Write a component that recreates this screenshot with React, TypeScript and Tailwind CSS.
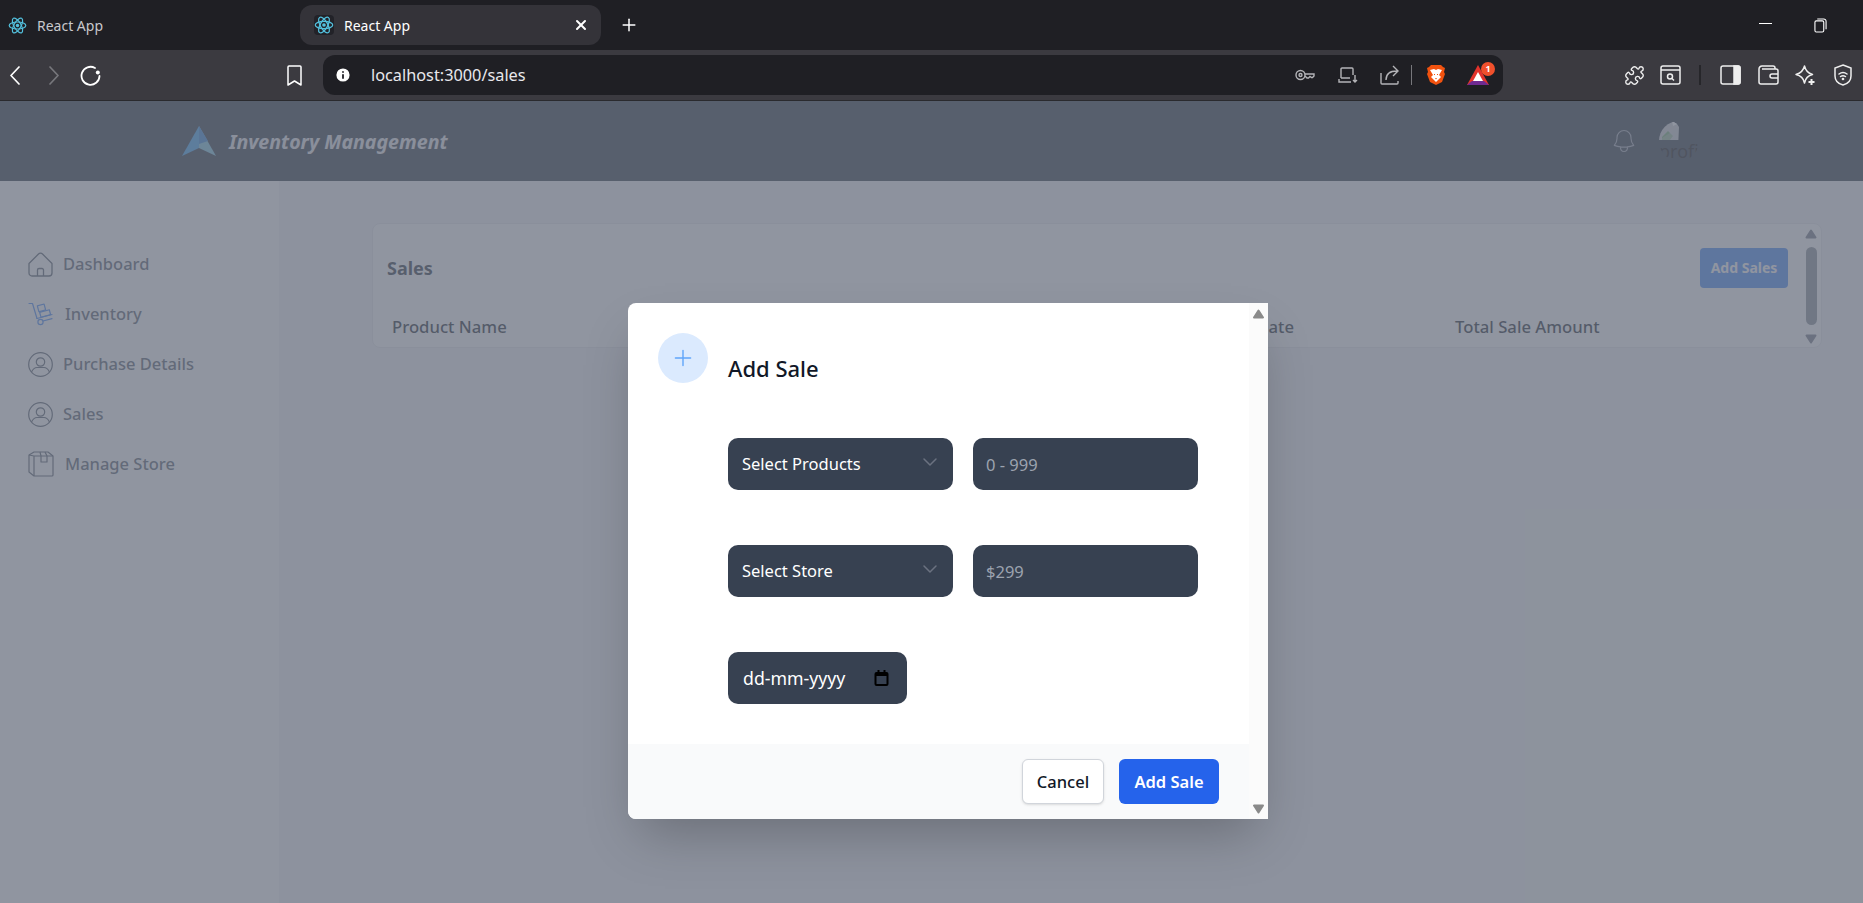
import React from "react";
import { HiOutlineBell } from "react-icons/hi2";
import { ChevronDown, Plus, X, Info, Puzzle } from "lucide-react";

const ReactIcon = ({ className }: { className?: string }) => (
  <svg viewBox="0 0 24 24" className={className} fill="none" stroke="#53c1de" strokeWidth="1.5">
    <circle cx="12" cy="12" r="2.2" fill="#53c1de" stroke="none" />
    <ellipse cx="12" cy="12" rx="10.5" ry="4.4" />
    <ellipse cx="12" cy="12" rx="10.5" ry="4.4" transform="rotate(60 12 12)" />
    <ellipse cx="12" cy="12" rx="10.5" ry="4.4" transform="rotate(120 12 12)" />
  </svg>
);

const Tri = ({ down, className }: { down?: boolean; className?: string }) => (
  <svg viewBox="0 0 12 10" className={className}>
    <path d={down ? "M1.500 1.500h9L6 8.500z" : "M6 1.500l4.500 7h-9z"} fill="currentColor" stroke="currentColor" strokeWidth="2" strokeLinejoin="round" />
  </svg>
);

const HomeIcon = () => (
  <svg viewBox="0 0 25 25" className="w-[25px] h-[25px] text-[#4b5563] shrink-0" fill="none" stroke="currentColor" strokeWidth="1.300" strokeLinejoin="round">
    <path d="M1 11.500L10.500 2a2.800 2.800 0 0 1 4 0L24 11.500V21a3 3 0 0 1-3 3H4a3 3 0 0 1-3-3z" />
    <path d="M9.500 24v-6a1.500 1.500 0 0 1 1.500-1.500h3a1.500 1.500 0 0 1 1.500 1.500v6" />
  </svg>
);

const UserIcon = () => (
  <svg viewBox="0 0 25 25" className="w-[25px] h-[25px] text-[#4b5563] shrink-0" fill="none" stroke="currentColor" strokeWidth="1.200">
    <circle cx="12.500" cy="12.500" r="11.800" />
    <circle cx="12.500" cy="10" r="4.200" />
    <path d="M3.500 20c1.500-3 4-4.500 5.500-4.500h7c1.500 0 4 1.500 5.500 4.500" />
  </svg>
);

const HandTruck = () => (
  <svg viewBox="0 0 26 24" className="w-[26px] h-[24px] text-[#3b82f6] shrink-0" fill="none" stroke="currentColor" strokeWidth="1.200" strokeLinecap="round" strokeLinejoin="round">
    <path d="M1 1.500h3.500l4.500 15" />
    <rect x="10" y="3" width="7" height="6" transform="rotate(-15 13 6)" />
    <rect x="12" y="9" width="10" height="5" transform="rotate(-15 17 11)" />
    <circle cx="12.500" cy="20" r="2.600" />
    <path d="M15 19l9-2.400M9 16.500l15-4" />
  </svg>
);

const BoxIcon = () => (
  <svg viewBox="0 0 26 26" className="w-[26px] h-[26px] text-[#4b5563] shrink-0" fill="none" stroke="currentColor" strokeWidth="1.200" strokeLinejoin="round">
    <path d="M1 4l5-3h14l5 4v19a1 1 0 0 1-1 1H6l-5-4z" />
    <path d="M6 25V5M1 4l5 1h19" />
    <path d="M12 1l1 4v6h6V5l-2-4" />
  </svg>
);

const NavRow = ({ icon, label, gap }: { icon: React.ReactNode; label: string; gap: string }) => (
  <div className={`flex items-center h-[50px] ${gap}`}>
    {icon}
    <span className="text-[16.500px] text-[#4b5563] font-medium">{label}</span>
  </div>
);

const field = "h-[52px] rounded-[10px] bg-[#374151] text-[16.500px] text-white flex items-center";

export default function App() {
  return (
    <div className="w-screen h-screen overflow-hidden flex flex-col bg-white font-['Noto_Sans',sans-serif]">
      {/* window title strip */}
      <div className="h-[50px] bg-[#1f1f24] flex items-center shrink-0 text-[14px]">
        <div className="w-[300px] flex items-center pl-2 gap-[10px] text-[#c8c8cc]">
          <ReactIcon className="w-[19px] h-[19px]" />
          <span>React App</span>
        </div>
        <div className="w-[301px] h-10 bg-[#343339] rounded-xl flex items-center pl-[14px] pr-3 text-white">
          <div className="w-5 h-5 bg-[#222228] rounded-sm flex items-center justify-center"><ReactIcon className="w-[20px] h-[20px]" /></div>
          <span className="ml-[10px]">React App</span>
          <X className="ml-auto w-4 h-4" strokeWidth={3} />
        </div>
        <Plus className="ml-[18px] w-[20px] h-[20px] text-white" strokeWidth={1.800} />
        <div className="ml-auto w-[13px] h-px bg-white -mt-[3px]" />
        <svg viewBox="0 0 14 16" className="ml-[42px] mr-[36px] w-[13px] h-[15px]" fill="none" stroke="#fff" strokeWidth="1.200">
          <rect x="1" y="3" width="9.500" height="12" rx="1.500" />
          <path d="M3.500 1h7a2.500 2.500 0 0 1 2.500 2.500V12" />
        </svg>
      </div>

      {/* browser toolbar */}
      <div className="h-[51px] bg-[#3b3a40] border-b border-[#2a2a2e] flex items-center shrink-0">
        <svg viewBox="0 0 10 19" className="ml-[10px] w-[10px] h-[19px]" fill="none" stroke="#fff" strokeWidth="1.700" strokeLinecap="round" strokeLinejoin="round"><path d="M9 1L1 9.500 9 18" /></svg>
        <svg viewBox="0 0 10 19" className="ml-[29px] w-[10px] h-[19px]" fill="none" stroke="#77777c" strokeWidth="1.700" strokeLinecap="round" strokeLinejoin="round"><path d="M1 1l8 8.500L1 18" /></svg>
        <svg viewBox="0 0 21 21" className="ml-[21px] w-[21px] h-[21px]" fill="none" stroke="#fff" strokeWidth="1.800" strokeLinecap="round">
          <path d="M15 3a9 9 0 1 0 4.500 8" /><circle cx="17.800" cy="7.500" r="2" fill="#fff" stroke="none" />
        </svg>
        <svg viewBox="0 0 15 21" className="ml-[186px] w-[15px] h-[21px]" fill="none" stroke="#fff" strokeWidth="1.500" strokeLinejoin="round"><path d="M1 2a1 1 0 0 1 1-1h11a1 1 0 0 1 1 1v18l-6.500-4L1 20z" /></svg>
        <div className="ml-[21px] w-[1180px] h-10 rounded-xl bg-[#1f1f24] flex items-center pl-[11px]">
          <Info className="w-[18px] h-[18px] text-[#1f1f24] fill-white" strokeWidth={2.400} />
          <span className="ml-[19px] text-[16.300px] text-[#e8e8ec]">localhost:3000/sales</span>
          <div className="ml-auto flex items-center text-[#b4b4b8]">
            <svg viewBox="0 0 20 12" className="w-[20px] h-[12px]" fill="none" stroke="currentColor" strokeWidth="1.400">
              <circle cx="5.500" cy="6" r="4.500" /><circle cx="5.500" cy="6" r="1.500" />
              <path d="M10 5h9v2l-1.500 1.500h-1L15 7.500l-1.500 1.500H12L10 7" />
            </svg>
            <svg viewBox="0 0 20 16" className="ml-[23px] w-[20px] h-[16px]" fill="none" stroke="currentColor" strokeWidth="1.400">
              <path d="M3 11V2a1 1 0 0 1 1-1h10a1 1 0 0 1 1 1v6M1 12v3h12M17 8v7M15 13l2 2 2-2M3 11h9" />
            </svg>
            <svg viewBox="0 0 20 20" className="ml-[22px] w-[20px] h-[20px]" fill="none" stroke="currentColor" strokeWidth="1.400">
              <path d="M1 8v10a1 1 0 0 0 1 1h15a1 1 0 0 0 1-1v-2M6 15c0-6 4-9 11-9M13 1l5 5-5 5" />
            </svg>
            <div className="ml-[11px] w-px h-5 bg-[#77777c]" />
            <svg viewBox="0 0 20 22" className="ml-[14px] w-[20px] h-[22px]">
              <path d="M5 1h10l2 2 2 1-1 4 1 2-3 8-6 3-6-3-3-8 1-2-1-4 2-1z" fill="#f1520f" />
              <path d="M4 6l4-1 2 1 2-1 4 1-3 5 2 2-5 5-5-5 2-2z" fill="#fff" />
              <path d="M8 10h1v1H8zM11 10h1v1h-1zM9 14h2l-1 1.500z" fill="#f1520f" />
            </svg>
            <div className="ml-[21px] mr-[14px] relative w-[22px] h-[20px]">
              <svg viewBox="0 0 22 20" className="w-[22px] h-[20px]">
                <path d="M11 0L22 20H0z" fill="#e2332c" />
                <path d="M0 20l5-4h12l5 4z" fill="#6e2a90" />
                <path d="M11 7l5 9H6z" fill="#fff" />
              </svg>
              <span className="absolute -top-[3px] -right-[6px] w-[14px] h-[14px] rounded-full bg-[#f0502c] text-white text-[9px] font-bold flex items-center justify-center">1</span>
            </div>
          </div>
        </div>
        <Puzzle className="ml-[121px] w-[21px] h-[21px] text-[#eee]" strokeWidth={1.600} />
        <svg viewBox="0 0 21 20" className="ml-[15px] w-[21px] h-[20px]" fill="none" stroke="#eee" strokeWidth="1.500">
          <rect x="1" y="1" width="19" height="18" rx="2" /><path d="M1 5h19" />
          <circle cx="10" cy="11.500" r="2.500" /><path d="M12 13.500l2 2" />
        </svg>
        <div className="ml-[18px] w-[2px] h-5 bg-[#26262a]" />
        <svg viewBox="0 0 21 20" className="ml-[19px] w-[21px] h-[20px]" fill="none" stroke="#eee" strokeWidth="1.500">
          <rect x="1" y="1" width="19" height="18" rx="2" /><path d="M14 1h4a2 2 0 0 1 2 2v14a2 2 0 0 1-2 2h-4z" fill="#eee" />
        </svg>
        <svg viewBox="0 0 21 20" className="ml-[17px] w-[21px] h-[20px]" fill="none" stroke="#eee" strokeWidth="1.500" strokeLinejoin="round">
          <path d="M1 4a3 3 0 0 1 3-3h11a2 2 0 0 1 2 2v1M1 4v13a2 2 0 0 0 2 2h15a2 2 0 0 0 2-2V6a2 2 0 0 0-2-2H4" />
          <path d="M20 9h-6a2 2 0 0 0-2 2v0a2 2 0 0 0 2 2h6" />
        </svg>
        <svg viewBox="0 0 21 21" className="ml-[16px] w-[21px] h-[21px]" fill="none" stroke="#eee" strokeWidth="1.500" strokeLinejoin="round">
          <path d="M9.500 1c1 4.500 3 7 8 8.500-4.500 1-7 3.500-8 8.500-1-5-3.500-7.500-8.500-8.500 5-1.500 7.500-4 8.500-8.500z" />
          <path d="M16.500 14v6M13.500 17h6" strokeWidth="2" />
        </svg>
        <svg viewBox="0 0 20 22" className="ml-[17px] w-[20px] h-[22px]" fill="none" stroke="#eee" strokeWidth="1.500" strokeLinecap="round">
          <path d="M10 1l8 3v8c0 5-4 8-8 9-4-1-8-4-8-9V4z" />
          <path d="M6 10c2.500-2 5.500-2 8 0M7.500 12.500c1.500-1 3.500-1 5 0" /><circle cx="10" cy="15" r=".6" />
        </svg>
      </div>

      {/* app */}
      <div className="relative flex-1 flex flex-col min-h-0">
        <header className="h-20 bg-[#1f2937] shrink-0 flex items-center pl-[182px]">
          <svg viewBox="0 0 34 30" className="w-[34px] h-[30px]">
            <path d="M17 0L0 30l17-8z" fill="#349ef0" />
            <path d="M17 0l17 30-17-8z" fill="#74c2e0" />
            <path d="M17 0v18l9-3z" fill="#2a7fd5" />
          </svg>
          <span className="ml-[13px] mt-[2px] text-[19.600px] font-bold italic text-[#e5e7eb]">Inventory Management</span>
          <HiOutlineBell className="ml-auto w-7 h-7 text-[#9ca3af] [&_path]:stroke-1" />
          <div className="ml-[21px] mr-[164px] w-10 h-10 rounded-full overflow-hidden">
            <svg viewBox="0 0 20 20" className="w-5 h-5 block">
              <path d="M0 19V10C3 4 8 1 13 0l5 3 2 3-1 13z" fill="#c9ccd0" />
              <path d="M3 16l6-6 5 5-3 4H3z" fill="#6faa6f" />
              <path d="M13 0l5 3-4 2z" fill="#fff" />
              <path d="M0 19l20-13v13z" fill="#c9ccd0" opacity=".4" />
            </svg>
            <span className="block text-[18px] leading-[20px] text-black">profile</span>
          </div>
        </header>

        <div className="flex-1 flex min-h-0">
          <aside className="w-[279px] bg-white pt-[58px] pl-[28px] flex flex-col shrink-0">
            <NavRow gap="gap-[10px]" icon={<HomeIcon />} label="Dashboard" />
            <NavRow gap="gap-[11px]" icon={<HandTruck />} label="Inventory" />
            <NavRow gap="gap-[10px]" icon={<UserIcon />} label="Purchase Details" />
            <NavRow gap="gap-[10px]" icon={<UserIcon />} label="Sales" />
            <NavRow gap="gap-[11px]" icon={<BoxIcon />} label="Manage Store" />
          </aside>
          <main className="flex-1 bg-[#f3f4f6] pt-[42px] pl-[93px] pr-[41px] min-w-0">
            <div className="h-[125px] bg-white border border-[#e5e7eb] rounded-lg flex">
              <div className="flex-1 min-w-0 pl-[14px] pt-[24px]">
                <div className="flex items-center justify-between h-10 pr-[16px]">
                  <span className="text-lg font-bold text-[#1f2937]">Sales</span>
                  <span className="w-[88px] h-10 bg-[#3b82f6] rounded text-white text-sm font-bold flex items-center justify-center">Add Sales</span>
                </div>
                <div className="mt-[26px] pl-[5px] flex text-[16.700px] font-medium text-[#111827]">
                  <span className="w-[308px]">Product Name</span>
                  <span className="w-[511px]">Stock Sold</span>
                  <span className="w-[244px]">Sales Date</span>
                  <span>Total Sale Amount</span>
                </div>
              </div>
              <div className="w-[14px] mr-[3px] flex flex-col items-center pt-[5px] text-[#6b7280]">
                <Tri className="w-3 h-[10px]" />
                <div className="mt-2 w-[11px] h-[78px] rounded-full bg-[#4b5563]/70" />
                <Tri down className="mt-[9px] w-3 h-[10px]" />
              </div>
            </div>
          </main>
        </div>

        <div className="absolute inset-0 bg-[#6b7280]/75" />

        {/* modal */}
        <div className="absolute left-[628px] top-[202px] w-[640px] h-[516px] bg-white rounded-l-lg shadow-2xl flex overflow-hidden">
          <div className="flex-1 flex flex-col min-w-0">
            <div className="flex-1 pl-[30px] pt-[30px] flex gap-5">
              <div className="w-[50px] h-[50px] rounded-full bg-[#dbeafe] flex items-center justify-center shrink-0">
                <Plus className="w-[26px] h-[26px] text-[#60a5fa]" strokeWidth={1.300} />
              </div>
              <div>
                <h3 className="mt-[21px] text-[22px] leading-7 font-medium text-[#111827]">Add Sale</h3>
                <div className="mt-[56px] grid grid-cols-[225px_225px] gap-x-5 gap-y-[55px]">
                  <div className={`${field} pl-[14px] pr-[11px] justify-between`}>
                    <span className="pt-[1px]">Select Products</span>
                    <ChevronDown className="w-6 h-6 text-[#6b7280] -mt-1" strokeWidth={1.500} />
                  </div>
                  <input className={`${field} px-[13px] placeholder:text-[#9ca3af] outline-none`} placeholder="0 - 999" />
                  <div className={`${field} pl-[14px] pr-[11px] justify-between`}>
                    <span className="pt-[1px]">Select Store</span>
                    <ChevronDown className="w-6 h-6 text-[#6b7280] -mt-1" strokeWidth={1.500} />
                  </div>
                  <input className={`${field} px-[13px] placeholder:text-[#9ca3af] outline-none`} placeholder="$299" />
                  <div className={`${field} w-[179px] pl-[15px] pr-[18px] justify-between`}>
                    <span className="text-[17.700px]">dd-mm-yyyy</span>
                    <svg viewBox="0 0 14 16" className="w-[15px] h-[16px]">
                      <path d="M3 0h2v2h4V0h2v2h1a2 2 0 0 1 2 2v10a2 2 0 0 1-2 2H2a2 2 0 0 1-2-2V4a2 2 0 0 1 2-2h1zM2 6v8h10V6z" fill="#000" />
                    </svg>
                  </div>
                </div>
              </div>
            </div>
            <div className="h-[75px] bg-[#f9fafb] flex items-center justify-end gap-[15px] pr-[30px] shrink-0">
              <span className="w-[82px] h-[45px] pt-[1px] bg-white border border-[#d1d5db] rounded-md shadow-sm text-[16.500px] font-medium text-[#111827] flex items-center justify-center">Cancel</span>
              <span className="w-[100px] h-[45px] pt-[1px] bg-[#2563eb] rounded-md text-[16.500px] font-semibold text-white flex items-center justify-center">Add Sale</span>
            </div>
          </div>
          <div className="w-[19px] bg-[#fbfbfb] flex flex-col items-center justify-between pt-[6px] pb-[5px] text-[#8a8a8a] shrink-0">
            <Tri className="w-[13px] h-[10px]" />
            <Tri down className="w-[13px] h-[10px]" />
          </div>
        </div>
      </div>
    </div>
  );
}
